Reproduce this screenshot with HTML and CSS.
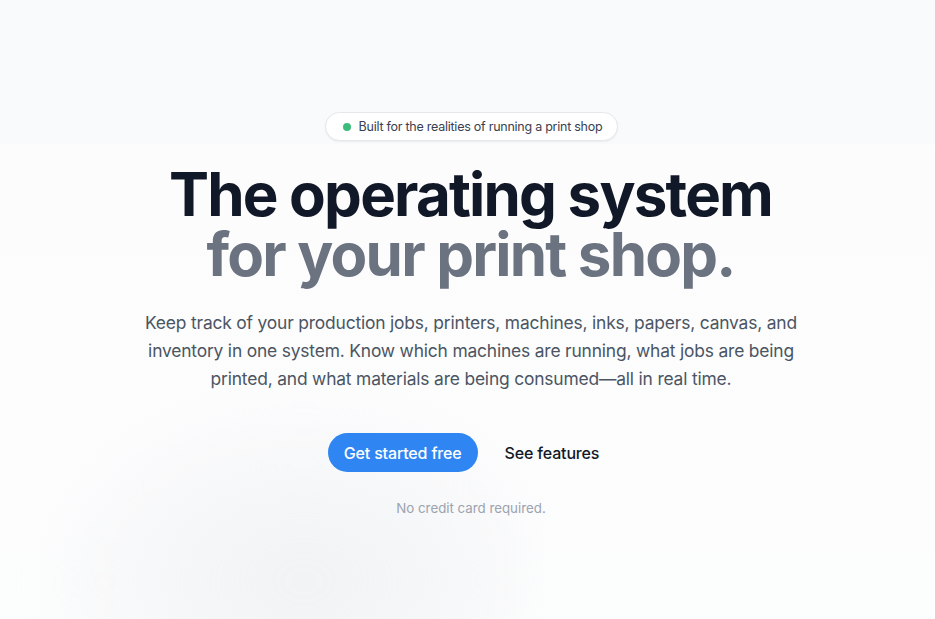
FILE: index.html
```html
<!DOCTYPE html>
<html lang="en">
<head>
<meta charset="utf-8">
<title>Print shop OS</title>
<link rel="stylesheet" href="styles.css">
</head>
<body>
<div class="page">
  <div class="blob"></div>
  <main class="hero">
    <div class="badge"><span class="dot"></span>Built for the realities of running a print shop</div>
    <h1 class="title"><span class="line1">The operating system</span><span class="line2">for your print shop.</span></h1>
    <p class="lead">Keep track of your production jobs, printers, machines, inks, papers, canvas, and inventory in one system. Know which machines are running, what jobs are being printed, and what materials are being consumed—all in real time.</p>
    <div class="actions">
      <a class="btn-primary" href="#">Get started free</a>
      <a class="btn-link" href="#">See features</a>
    </div>
    <p class="note">No credit card required.</p>
  </main>
</div>
</body>
</html>
```

FILE: styles.css
```css
* { box-sizing: border-box; }
html, body { margin: 0; padding: 0; }
body {
  font-family: Inter, "Noto Sans", sans-serif;
  background: #fafbfc;
  color: #111827;
}
.page {
  position: relative;
  width: 100%;
  height: 619px;
  overflow: hidden;
  background: linear-gradient(180deg, #f9fafb 0px, #f9fafb 144px, #fcfcfd 145px, #fcfdfd 619px);
}
.blob {
  position: absolute;
  left: 40px;
  top: 400px;
  width: 480px;
  height: 330px;
  border-radius: 40%;
  background: radial-gradient(ellipse at 55% 55%, rgba(232,235,239,0.6) 0%, rgba(240,242,244,0.45) 45%, rgba(250,251,252,0) 72%);
  filter: blur(24px);
}
.hero {
  position: relative;
  display: flex;
  flex-direction: column;
  align-items: center;
  padding-top: 112px;
  text-align: center;
}
.badge {
  display: flex;
  align-items: center;
  gap: 8px;
  height: 29px;
  margin-left: 8px;
  padding: 0 15px 0 17px;
  background: #ffffff;
  border: 1px solid #e5e7eb;
  border-radius: 999px;
  box-shadow: 0 1px 2px rgba(16,24,40,0.06);
  font-size: 12.5px;
  color: #374151;
  letter-spacing: -0.02em;
}
.dot {
  width: 8px;
  height: 8px;
  border-radius: 50%;
  background: #3dbb7b;
}
.title {
  margin: 23px 0 0 6px;
  display: flex;
  flex-direction: column;
  font-size: 60px;
  line-height: 60px;
  font-weight: 700;
  letter-spacing: -0.03em;
}
.line1 { color: #111827; }
.line2 { color: #6b7280; }
.lead {
  margin: 25px 0 0 7px;
  max-width: 680px;
  font-size: 17.4px;
  line-height: 28px;
  color: #4b5563;
  letter-spacing: -0.01em;
}
.actions {
  display: flex;
  align-items: center;
  gap: 27px;
  margin-top: 40px;
  margin-right: 8px;
}
.btn-primary {
  display: inline-flex;
  align-items: center;
  justify-content: center;
  height: 39px;
  padding: 0 16px;
  border-radius: 999px;
  background: #2f86f2;
  color: #ffffff;
  font-size: 16px;
  font-weight: 500;
  text-decoration: none;
  letter-spacing: -0.01em;
}
.btn-link {
  color: #111827;
  font-size: 16px;
  font-weight: 500;
  text-decoration: none;
  letter-spacing: -0.01em;
}
.note {
  margin: 28px 0 0 7px;
  font-size: 13.3px;
  color: #9ca3af;
}
```
